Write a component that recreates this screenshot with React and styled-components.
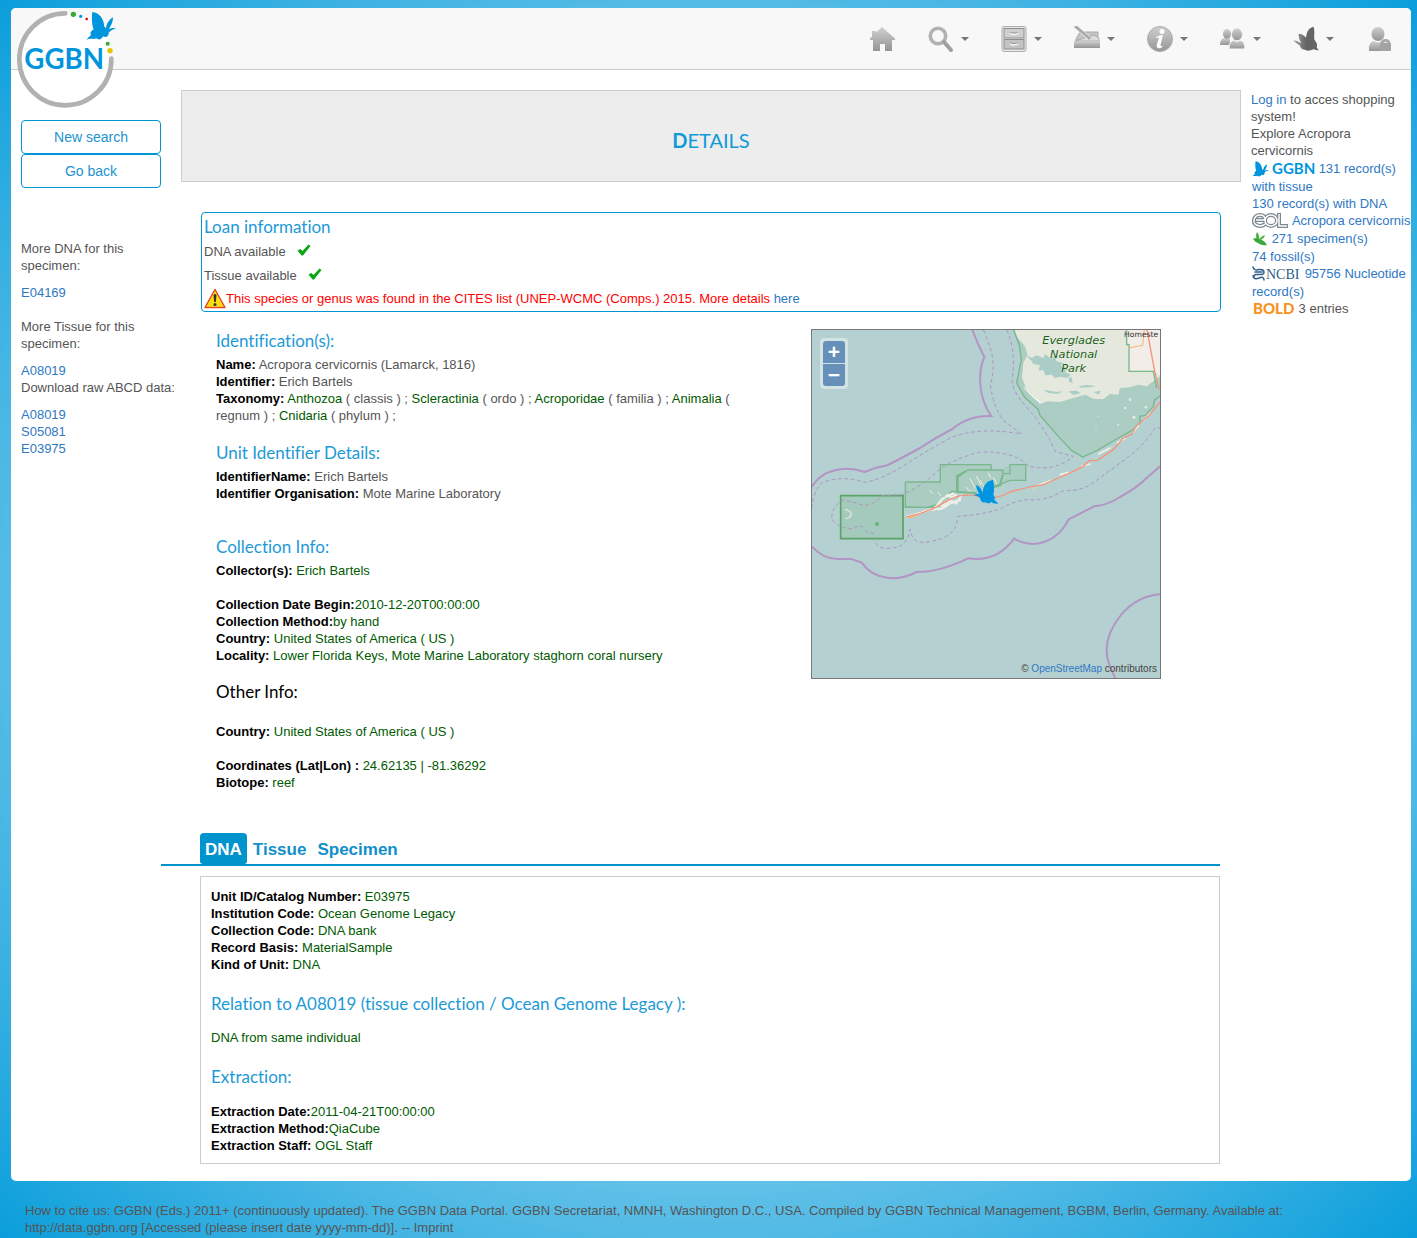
import { useState } from "react";
import styled, { createGlobalStyle } from "styled-components";

const GlobalStyle = createGlobalStyle`
  * {
    box-sizing: border-box;
  }

  html {
    min-height: 100%;
  }

  body {
    margin: 0;
    min-height: 100vh;
    background: radial-gradient(ellipse at center, #ffffff 0%, #0a9edb 100%);
    color: #555;
    font-family: "Liberation Sans", Arial, sans-serif;
    font-size: 13px;
    line-height: 17px;
  }

  a {
    color: #2f78c4;
    text-decoration: none;
  }

  svg {
    flex-shrink: 0;
  }
`;

const Page = styled.div`
  padding: 8px 6px 0 11px;
`;

const Sheet = styled.div`
  padding-bottom: 17px;
  border-radius: 5px;
  background: #fff;
`;

const Header = styled.header`
  position: relative;
  display: flex;
  justify-content: flex-end;
  height: 62px;
  padding: 1px 19px 0 0;
  border-bottom: 1px solid #ccc;
  border-radius: 5px 5px 0 0;
  background: #f8f8f8;
`;

const LogoLink = styled.a`
  position: absolute;
  top: 0;
  left: 5px;
`;

const Nav = styled.nav`
  display: flex;
  align-items: center;
  gap: 32px;
`;

const NavButton = styled.button`
  display: flex;
  align-items: center;
  gap: 7px;
  padding: 0;
  border: 0;
  background: none;
  cursor: pointer;
`;

const Caret = styled.span`
  border: 4px solid transparent;
  border-top-color: #777;
  border-bottom: 0;
`;

const Columns = styled.div`
  display: grid;
  grid-template-columns: 150px minmax(0, 1fr) 170px;
`;

const Sidebar = styled.aside`
  padding: 50px 0 0 10px;
  white-space: nowrap;
`;

const SideButton = styled.button`
  display: block;
  width: 100%;
  height: 34px;
  border: 1px solid #0095d5;
  border-radius: 4px;
  background: #fff;
  color: #1c93d0;
  font: 14px "Liberation Sans", Arial, sans-serif;
  cursor: pointer;
`;

const SideText = styled.p`
  width: 130px;
  margin: 0 0 10px;
  white-space: ${(props) => (props.$wide ? "nowrap" : "normal")};
`;

const SideLinks = styled.div`
  display: flex;
  flex-direction: column;
  align-items: flex-start;
  margin-bottom: ${(props) => (props.$gap ? "17px" : "0")};
`;

const SideGroups = styled.div`
  margin-top: 52px;
`;

const Main = styled.main`
  padding-top: 20px;
`;

const Banner = styled.div`
  display: flex;
  align-items: center;
  justify-content: center;
  height: 92px;
  margin-left: 20px;
  padding-top: 8px;
  border: 1px solid #ccc;
  background: #ededed;
`;

const Title = styled.h1`
  margin: 0;
  color: #0f9ad8;
  font: 400 20px/30px Lato, sans-serif;
  text-transform: uppercase;

  &::first-letter {
    font-weight: 700;
  }
`;

const LoanBox = styled.section`
  margin: 30px 20px 0 40px;
  padding: 0 2px 2px;
  border: 1px solid #0095d5;
  border-radius: 4px;
`;

const Heading = styled.h3`
  margin: ${(props) => props.$margin || "14px 0 0"};
  color: ${(props) => (props.$dark ? "#000" : "#1c9ad6")};
  font: 400 17px/30px Lato, sans-serif;
  font-variant-ligatures: none;
`;

const Available = styled.div`
  display: flex;
  align-items: center;
  gap: 11px;
  height: ${(props) => (props.$tall ? "26px" : "21px")};

  svg {
    margin-bottom: 3px;
  }
`;

const Warning = styled.p`
  display: flex;
  align-items: center;
  margin: 0;
  height: 21px;
  color: #f00;
`;

const Details = styled.div`
  display: grid;
  grid-template-columns: minmax(0, 1fr) 350px;
  align-items: start;
  margin: 17px 80px 0 55px;
`;

const Facts = styled.div`
  max-width: 530px;
  padding-bottom: 42px;
`;

const Row = styled.div`
  margin-top: ${(props) => (props.$gap ? "17px" : "0")};
  color: ${(props) => (props.$grey ? "#555" : "#005a00")};
`;

const Label = styled.strong`
  color: #000;
`;

const Taxon = styled.span`
  color: #005a00;
`;

const MapFrame = styled.div`
  position: relative;
  height: 350px;
  border: 1px solid #777;
  overflow: hidden;
`;

const MapImage = styled.svg`
  display: block;
  width: 100%;
  height: 100%;
`;

const ZoomBox = styled.div`
  position: absolute;
  top: 8px;
  left: 8px;
  display: flex;
  flex-direction: column;
  gap: 1px;
  padding: 3px;
  border-radius: 4px;
  background: rgba(255, 255, 255, 0.4);
`;

const ZoomButton = styled.button`
  width: 22px;
  height: 22px;
  padding: 0;
  border: 0;
  border-radius: ${(props) => (props.$last ? "0 0 3px 3px" : "3px 3px 0 0")};
  background: #668fb9;
  color: #fff;
  font: 700 21px/20px "Liberation Sans", Arial, sans-serif;
`;

const Attribution = styled.div`
  position: absolute;
  right: 3px;
  bottom: 1px;
  color: #444;
  font-size: 10px;
`;

const Tabs = styled.div`
  display: flex;
  gap: 1px;
  margin-right: 21px;
  padding-left: 39px;
  border-bottom: 2px solid #0093cc;
`;

const Tab = styled.button`
  height: 31px;
  padding: 2px 5px 0;
  border: 0;
  border-radius: 4px 4px 3px 3px;
  background: ${(props) => (props.$active ? "#0093cc" : "none")};
  color: ${(props) => (props.$active ? "#fff" : "#118fca")};
  font: 700 17px "Liberation Sans", Arial, sans-serif;
  cursor: pointer;
`;

const Panel = styled.section`
  margin: 10px 21px 0 39px;
  padding: 11px 10px 9px;
  border: 1px solid #ccc;
`;

const Explore = styled.aside`
  padding: 21px 0 0 10px;
`;

const ExploreList = styled.div`
  padding-left: 1px;
  margin-top: 1px;
`;

const Source = styled.div`
  white-space: ${(props) => (props.$nowrap ? "nowrap" : "normal")};

  svg {
    height: 18px;
    vertical-align: -5px;
  }
`;

const Footer = styled.footer`
  padding: 21px 14px 2px;
`;

function LogoButterfly({ color = "#0095dc" }) {
  return (
    <path
      fill={color}
      d="M277 36C297 38 311 54 313 80L318 84C320 69 329 58 339 52C340 63 334 76 326 88C332 84 341 82 348 86C338 87 332 91 326 98C327 108 319 114 309 109C305 119 296 121 289 115C282 120 272 113 260 119C264 112 269 109 273 105C269 99 273 93 281 88C275 74 275 52 277 36Z"
    />
  );
}

function SideButterfly({ fill }) {
  return (
    <path
      fill={fill}
      d="M549 456C530 458 518 474 518 496C516 484 508 474 498 471C499 482 503 491 508 498C502 496 496 501 489 500C497 503 506 504 510 510C511 518 517 526 526 523C532 527 540 528 544 521C549 528 556 525 565 528C562 522 558 520 553 516C557 510 553 504 550 500C554 486 552 468 549 456Z"
    />
  );
}

function Logo() {
  return (
    <svg width="101" height="100" viewBox="48 24 303 300">
      <circle cx="195" cy="177" r="139" fill="#fff" />
      <path
        d="M196 40A138 138 0 1 0 334 176"
        fill="none"
        stroke="#b1b1b1"
        strokeWidth="14"
        strokeLinecap="round"
      />
      <circle cx="220" cy="43" r="8" fill="#3aaa35" />
      <circle cx="242" cy="49" r="5" fill="#0095dc" />
      <circle cx="260" cy="57" r="4" fill="#e3001b" />
      <circle cx="323" cy="131" r="6" fill="#3aaa35" />
      <circle cx="330" cy="152" r="8" fill="#e8c200" />
      <LogoButterfly />
      <text
        x="73"
        y="207"
        fill="#0095dc"
        fontFamily="Lato, sans-serif"
        fontWeight="700"
        fontSize="83"
      >
        GGBN
      </text>
    </svg>
  );
}

function NavIcon({ name }) {
  const fill = "url(#metal)";
  return (
    <svg width="26" height="26" viewBox="0 0 26 26">
      {name === "home" && (
        <path
          fill={fill}
          d="M12 1L17 5.5L25 12.5V14H22V25H15V18H10V25H3V14H0V12.5L2 10.500V5H6V6.5Z"
        />
      )}
      {name === "search" && (
        <>
          <circle cx="10" cy="10" r="7.7" fill="none" stroke="#b2b2b2" strokeWidth="3.6" />
          <path d="M16 16L23 24" stroke="#a0a0a0" strokeWidth="4" strokeLinecap="round" />
        </>
      )}
      {name === "collection" && (
        <>
          <rect x="1" y="0.500" width="24" height="25" rx="2" fill="#e8e8e8" stroke="#b0b0b0" />
          <rect x="3" y="2.500" width="20" height="9.500" fill="#cfcfcf" stroke="#8f8f8f" />
          <rect x="3" y="13.500" width="20" height="9.500" fill="#c3c3c3" stroke="#8f8f8f" />
          <path d="M9 7Q10 8.500 13 8.500T17 7M9 17.500Q10 19 13 19T17 17.500" fill="none" stroke="#f4f4f4" strokeWidth="1.500" />
          <path d="M9 6Q10 7 13 7T17 6M9 16.500Q10 17.500 13 17.500T17 16.500" fill="none" stroke="#999" />
        </>
      )}
      {name === "tray" && (
        <>
          <path d="M2 13L6 6L24 6V14H2Z" fill="#c4c4c4" stroke="#aaa" />
          <path d="M1 15L20 9L25 12V15Z" fill="#ddd" stroke="#aaa" />
          <path d="M0 15H26V22H0Z" fill={fill} />
          <path d="M1 0L15 12" stroke="#fff" strokeWidth="4" />
          <path d="M1 0L14 11L16 13" stroke="#aaa" strokeWidth="3" />
        </>
      )}
      {name === "info" && (
        <>
          <circle cx="13" cy="13" r="12.500" fill={fill} stroke="#aaa" />
          <circle cx="15" cy="5.500" r="2.500" fill="#fff" />
          <path d="M9 11Q13 9 16 9L13.500 19Q13 21 16.500 19.500Q14 23 11 22Q9 21 10 18L12 12Q11 11 9 12Z" fill="#fff" />
        </>
      )}
      {name === "people" && (
        <>
          <ellipse cx="7" cy="8" rx="4" ry="5" fill={fill} />
          <path d="M0 19Q0 13 4 12Q7 14 10 12V19Z" fill={fill} />
          <ellipse cx="17" cy="8.500" rx="5.500" ry="6.500" fill={fill} stroke="#f8f8f8" />
          <path d="M9 23Q9 15 14 14Q17 17 20 14Q25 15 25 23Z" fill={fill} stroke="#f8f8f8" />
        </>
      )}
      {name === "user" && (
        <>
          <ellipse cx="12" cy="8" rx="6.500" ry="7" fill={fill} />
          <path d="M3 25Q2 16 8 15Q12 18 16 15L18 25Z" fill={fill} />
          <path d="M16 18Q16 14.500 19.500 14.500T23 18" fill="none" stroke="#aaa" strokeWidth="3" />
          <rect x="14" y="17" width="11" height="8" rx="1" fill="#a3a3a3" />
        </>
      )}
      {name === "butterfly" && (
        <svg viewBox="489 46 80 77">
          <path
            fill="url(#dusk)"
            d="M552 47C540 50 531 60 529 81C524 73 516 68 506 68C507 81 509 90 515 97C508 95 502 89 490 88C495 95 503 99 510 104C511 112 517 118 524 117C532 123 544 120 551 116L568 120L562 110C566 101 559 93 555 87C553 72 557 58 552 47Z"
          />
        </svg>
      )}
      <defs>
        <linearGradient id="metal" x1="0" y1="0" x2="0" y2="1">
          <stop offset="0" stopColor="#d0d0d0" />
          <stop offset="1" stopColor="#959595" />
        </linearGradient>
        <linearGradient id="dusk" x1="0" y1="0" x2="1" y2="0">
          <stop offset="0" stopColor="#a5a5a5" />
          <stop offset="0.5" stopColor="#656565" />
          <stop offset="1" stopColor="#666" />
        </linearGradient>
      </defs>
    </svg>
  );
}

function Check() {
  return (
    <svg width="14" height="12" viewBox="0 0 14 12">
      <path d="M0.500 6.500L3.500 5L5.500 7L11.500 0.500L13.500 2L6 11.500H4.500Z" fill="#0ca516" />
    </svg>
  );
}

function WarningSign() {
  return (
    <svg width="22" height="21" viewBox="0 0 22 21">
      <path d="M11 1.500L21 19.500H1Z" fill="#ffe81a" stroke="#e2492c" strokeWidth="1.500" strokeLinejoin="round" />
      <path d="M11 5L16 14L18.500 18H3.500Z" fill="#ffd000" opacity="0.5" />
      <path d="M9.500 7Q11 5 12.500 7L11.800 14H10.200Z" fill="#333" />
      <circle cx="11" cy="16.500" r="1.500" fill="#333" />
    </svg>
  );
}

// Florida Keys, drawn at three units per pixel
function KeysMap() {
  return (
    <MapImage viewBox="6 6 1044 1044" preserveAspectRatio="xMidYMid slice" role="img" aria-label="Map">
      <rect x="0" y="0" width="1056" height="1056" fill="#b5d0d0" />
      <path d="M608 0L634 95L620 165L644 208L685 245L690 262L745 325L785 368L818 387L862 367L915 336L970 305L990 285V265L1030 235L1050 200V0Z" fill="#abcdc4" />
      <path d="M612 0L622 28L645 55L652 80L640 105L636 150L650 185L668 205L690 228L712 220L750 222L790 210L826 200L850 212L880 214L900 198L925 200L930 180L960 178L985 170L1010 175L1050 145V0Z" fill="#e5e8dd" />
      <path d="M950 0H1060V150L1035 130L957 130V50L948 45Z" fill="#f2ede8" />
      <path d="M645 78L665 90L680 82L700 90L705 78L722 92L735 84L740 100L762 106L752 114L775 120L765 132L782 140L772 150L750 146L735 150L725 140L706 142L700 126L685 128L690 112L670 108L664 98Z" fill="#abcdc8" />
      <path d="M806 175L830 171L858 174L840 178L812 179ZM775 190L800 188L812 196L790 201ZM850 192L872 188L866 200ZM700 185L740 192L760 190L742 198L715 195ZM775 150L785 148L788 165L778 162Z" fill="#abcdc8" />
      <path d="M642 178Q665 208 692 224" fill="none" stroke="#fff" strokeWidth="3" />
      <g fill="#e5e8dd">
        <circle cx="865" cy="265" r="2" />
        <circle cx="858" cy="297" r="2" />
        <circle cx="945" cy="240" r="4" />
        <circle cx="972" cy="268" r="5" />
        <circle cx="1008" cy="238" r="4" />
        <circle cx="925" cy="290" r="3" />
        <circle cx="960" cy="215" r="4" />
      </g>
      <path d="M92 503H280V632H92Z" fill="#a4c9bd" />
      <path d="M286 462H391V410H543V426H572L600 410H647V457H600L572 474L500 482L440 495L400 520L370 538H286Z" fill="#aacdc2" />
      <g fill="none" stroke="#79b78c" strokeWidth="4">
        <path d="M608 0L628 50L634 95L620 165L644 208L685 245L690 262L745 325L785 368L818 387L862 367L915 336L970 305L990 285V265L1005 262L1030 235L1034 215L1050 205" />
        <path d="M950 0V50H957V130H1030L1040 180" />
        <path d="M286 462H391V410H543V426H475L440 443V490H425L400 510L375 538H286V462M286 538V536L350 538L380 530" />
        <path d="M543 426H578V437H600V410H647V457H600L572 468L555 474" />
        <path d="M466 430L443 447V492L500 495M578 440L570 472L548 478" strokeWidth="6" />
      </g>
      <path d="M92 503H279V632H92Z" fill="none" stroke="#58a564" strokeWidth="5" />
      <circle cx="201" cy="588" r="6" fill="#68b080" />
      <path d="M104 544Q124 548 124 560Q120 570 106 572" fill="none" stroke="#e3e7da" strokeWidth="4" />
      <g fill="none" stroke="#eff0e7" strokeLinecap="round">
        <path d="M375 540L395 515L415 500L425 510L440 500M395 533L420 518L438 526L455 502M410 505L430 497M292 566L330 555L360 545L395 542L420 526L450 516" strokeWidth="7" strokeDasharray="13 5 22 7" />
        <path d="M480 452L495 480M500 445L512 470M512 458L520 475M468 478L480 490M535 435L542 449M550 448L560 468M360 488L368 496M385 494L392 503" strokeWidth="3" />
        <path d="M680 473L725 457M750 440L775 434M815 415L840 408M865 378L900 360M922 344L945 331M968 313L985 293M1000 278L1022 255" strokeWidth="5" />
      </g>
      <g fill="none" stroke="#b295c5" strokeWidth="6">
        <path d="M485 0Q500 42 523 87C505 130 502 205 544 264Q475 262 427 303Q375 330 330 360Q290 382 232 412Q195 418 164 432C105 410 35 425 6 476" />
        <path d="M6 656Q44 697 90 693H124L155 704C194 760 266 760 320 732Q390 732 474 691Q560 704 612 632C670 665 740 645 776 574Q817 554 852 535Q892 532 930 507Q980 480 1010 450L1050 415" />
        <path d="M1050 799Q980 805 934 860Q868 940 901 1018L918 1056" />
      </g>
      <g fill="none" stroke="#ad94c2" strokeWidth="3" strokeDasharray="11 8">
        <path d="M520 6C545 60 560 110 541 170Q550 240 583 280L635 318Q505 295 420 330Q330 380 270 420Q210 455 165 463Q95 440 35 465Q6 500 6 540" />
        <path d="M590 6C615 60 612 100 606 165C620 220 670 250 690 290Q715 320 735 370L790 385Q735 432 655 415Q620 370 510 372Q440 390 390 423Q330 480 275 500L215 503Q180 545 140 525L100 516Q65 535 65 572Q85 602 125 602L152 592Q165 614 190 616Q195 670 240 660Q292 660 300 604Q310 655 360 640Q440 630 443 565Q520 560 570 543Q620 515 660 515Q710 519 760 488Q820 490 855 460Q925 410 970 375Q1010 340 1035 300H1050" />
      </g>
      <g fill="none" stroke="#f49378" strokeWidth="4">
        <path d="M290 567L330 557L370 542L420 514Q460 494 510 506Q560 516 600 492Q655 476 700 470L745 450L790 430L820 415L838 398L862 397L910 365L940 330L965 318L980 292L1015 265L1050 222" />
        <path d="M1010 0L1034 130L1048 185" />
      </g>
      <path d="M290 570L325 563M955 60L998 52L1003 0" fill="none" stroke="#f4b56d" strokeWidth="3" />
      <circle cx="672" cy="482" r="6" fill="#c5d7b4" />
      <g fill="#186020" stroke="#f1f4e9" strokeWidth="2" paintOrder="stroke" fontFamily="DejaVu Sans, sans-serif" fontStyle="italic" fontSize="34" textAnchor="middle">
        <text x="791" y="47">Everglades</text>
        <text x="791" y="89">National</text>
        <text x="791" y="131">Park</text>
      </g>
      <text x="942" y="28" fill="#333" fontFamily="DejaVu Sans, sans-serif" fontSize="23">
        Homeste
      </text>
      <SideButterfly fill="#0095e1" />
    </MapImage>
  );
}

function GgbnMark() {
  return (
    <svg width="63" viewBox="0 0 63 18">
      <svg x="0" y="0" width="17" height="17" viewBox="258 34 92 88">
        <LogoButterfly />
      </svg>
      <text x="20" y="14" fill="#0095dc" fontFamily="Lato, sans-serif" fontWeight="700" fontSize="15">
        GGBN
      </text>
    </svg>
  );
}

function EolMark() {
  return (
    <svg width="37" viewBox="0 0 37 18" fill="none">
      <g stroke="#7d8791" strokeWidth="4">
        <path d="M3 8H13Q13 3 8 3T2 8T8 14Q11 14 13 12" />
        <ellipse cx="19" cy="8.500" rx="6" ry="5.500" />
        <path d="M27 1V14H36" />
      </g>
      <g stroke="#fff" strokeWidth="1.500">
        <path d="M4 8H13Q13 3 8 3T2 8T8 14Q11 14 13 12" />
        <ellipse cx="19" cy="8.500" rx="6" ry="5.500" />
        <path d="M27 2V14H35" />
      </g>
    </svg>
  );
}

function LeafMark() {
  return (
    <svg width="16" viewBox="0 0 16 18">
      <path d="M1 9Q4 7 8 9Q13 11 15 15Q10 16 6 13Q3 12 1 9Z" fill="#38a839" />
      <path d="M5 9Q3 6 5 2Q8 6 7 10Q9 6 13 5Q12 9 8 10Z" fill="#4bb044" />
    </svg>
  );
}

function NcbiMark() {
  return (
    <svg width="49" viewBox="0 0 49 18">
      <g fill="none" stroke="#315d88" strokeWidth="1.500" strokeLinecap="round">
        <path d="M1 2Q2 6 7 4.500Q12 4 12 7.500Q12 10 6 9.500Q2 9 2 11.500M1 11Q2 15 7 13T12 15M3 7H10" />
      </g>
      <text x="14" y="14" fill="#315d88" fontFamily="Liberation Serif, serif" fontSize="14">
        NCBI
      </text>
    </svg>
  );
}

function BoldMark() {
  return (
    <svg width="43" viewBox="0 0 43 18">
      <text x="1" y="14" fill="#f7931e" fontFamily="Lato, sans-serif" fontWeight="900" fontSize="15">
        BOLD
      </text>
    </svg>
  );
}

const navItems = ["home", "search", "collection", "tray", "info", "people", "butterfly", "user"];

const taxa = [
  ["Anthozoa", "classis"],
  ["Scleractinia", "ordo"],
  ["Acroporidae", "familia"],
  ["Animalia", "regnum"],
  ["Cnidaria", "phylum"],
];

const unitRows = [
  ["Unit ID/Catalog Number:", "E03975"],
  ["Institution Code:", "Ocean Genome Legacy"],
  ["Collection Code:", "DNA bank"],
  ["Record Basis:", "MaterialSample"],
  ["Kind of Unit:", "DNA"],
];

function Fact({ label, children, ...props }) {
  return (
    <Row {...props}>
      <Label>{label}</Label>
      {children}
    </Row>
  );
}

function App() {
  const [tab, setTab] = useState("DNA");

  return (
    <>
      <GlobalStyle />
      <Page>
        <Sheet>
          <Header>
            <LogoLink href="#home" aria-label="GGBN">
              <Logo />
            </LogoLink>
            <Nav>
              {navItems.map((name) => (
                <NavButton key={name} type="button" aria-label={name}>
                  <NavIcon name={name} />
                  {name !== "home" && name !== "user" && <Caret />}
                </NavButton>
              ))}
            </Nav>
          </Header>

          <Columns>
            <Sidebar>
              <SideButton type="button">New search</SideButton>
              <SideButton type="button">Go back</SideButton>
              <SideGroups>
                <SideText>More DNA for this specimen:</SideText>
                <SideLinks $gap>
                  <a href="#E04169">E04169</a>
                </SideLinks>
                <SideText>More Tissue for this specimen:</SideText>
                <SideLinks>
                  <a href="#A08019">A08019</a>
                </SideLinks>
                <SideText $wide>Download raw ABCD data:</SideText>
                <SideLinks>
                  <a href="#abcd-A08019">A08019</a>
                  <a href="#abcd-S05081">S05081</a>
                  <a href="#abcd-E03975">E03975</a>
                </SideLinks>
              </SideGroups>
            </Sidebar>

            <Main>
              <Banner>
                <Title>Details</Title>
              </Banner>

              <LoanBox>
                <Heading $margin="-1px 0">Loan information</Heading>
                <Available>
                  DNA available
                  <Check />
                </Available>
                <Available $tall>
                  Tissue available
                  <Check />
                </Available>
                <Warning>
                  <WarningSign />
                  <span>
                    This species or genus was found in the CITES list (UNEP-WCMC (Comps.) 2015. More
                    details <a href="#cites">here</a>
                  </span>
                </Warning>
              </LoanBox>

              <Details>
                <Facts>
                  <Heading $margin="-3px 0 0">Identification(s):</Heading>
                  <Fact label="Name:" $grey> Acropora cervicornis (Lamarck, 1816)</Fact>
                  <Fact label="Identifier:" $grey> Erich Bartels</Fact>
                  <Fact label="Taxonomy:" $grey>
                    {taxa.map(([name, rank]) => (
                      <span key={name}>
                        {" "}
                        <Taxon>{name}</Taxon> ( {rank} ) ;
                      </span>
                    ))}
                  </Fact>

                  <Heading>Unit Identifier Details:</Heading>
                  <Fact label="IdentifierName:" $grey> Erich Bartels</Fact>
                  <Fact label="Identifier Organisation:" $grey> Mote Marine Laboratory</Fact>

                  <Heading $margin="30px 0 0">Collection Info:</Heading>
                  <Fact label="Collector(s):"> Erich Bartels</Fact>
                  <Fact label="Collection Date Begin:" $gap>2010-12-20T00:00:00</Fact>
                  <Fact label="Collection Method:">by hand</Fact>
                  <Fact label="Country:"> United States of America ( US )</Fact>
                  <Fact label="Locality:">
                    {" "}
                    Lower Florida Keys, Mote Marine Laboratory staghorn coral nursery
                  </Fact>

                  <Heading $dark $margin="13px 0 -1px">Other Info:</Heading>
                  <Fact label="Country:" $gap> United States of America ( US )</Fact>
                  <Fact label="Coordinates (Lat|Lon) :" $gap> 24.62135 | -81.36292</Fact>
                  <Fact label="Biotope:"> reef</Fact>
                </Facts>

                <MapFrame>
                  <KeysMap />
                  <ZoomBox>
                    <ZoomButton type="button" aria-label="Zoom in">+</ZoomButton>
                    <ZoomButton type="button" aria-label="Zoom out" $last>−</ZoomButton>
                  </ZoomBox>
                  <Attribution>
                    © <a href="#osm">OpenStreetMap</a> contributors
                  </Attribution>
                </MapFrame>
              </Details>

              <Tabs role="tablist">
                {["DNA", "Tissue", "Specimen"].map((name) => (
                  <Tab
                    key={name}
                    type="button"
                    role="tab"
                    aria-selected={tab === name}
                    $active={tab === name}
                    onClick={() => setTab(name)}
                  >
                    {name}
                  </Tab>
                ))}
              </Tabs>
              <Panel role="tabpanel">
                {unitRows.map(([label, value]) => (
                  <Fact key={label} label={label}> {value}</Fact>
                ))}
                <Heading $margin="16px 0 10px">
                  Relation to A08019 (tissue collection / Ocean Genome Legacy ):
                </Heading>
                <Row>DNA from same individual</Row>
                <Heading $margin="16px 0 11px">Extraction:</Heading>
                <Fact label="Extraction Date:">2011-04-21T00:00:00</Fact>
                <Fact label="Extraction Method:">QiaCube</Fact>
                <Fact label="Extraction Staff:"> OGL Staff</Fact>
              </Panel>
            </Main>

            <Explore>
              <div>
                <a href="#login">Log in</a> to acces shopping system!
              </div>
              <div>Explore Acropora cervicornis</div>
              <ExploreList>
                <Source>
                  <GgbnMark /> <a href="#tissue">131 record(s) with tissue</a>
                </Source>
                <Source>
                  <a href="#dna">130 record(s) with DNA</a>
                </Source>
                <Source $nowrap>
                  <EolMark /> <a href="#eol">Acropora cervicornis</a>
                </Source>
                <Source>
                  <LeafMark /> <a href="#specimens">271 specimen(s)</a>
                </Source>
                <Source>
                  <a href="#fossils">74 fossil(s)</a>
                </Source>
                <Source>
                  <NcbiMark /> <a href="#ncbi">95756 Nucleotide record(s)</a>
                </Source>
                <Source>
                  <BoldMark /> 3 entries
                </Source>
              </ExploreList>
            </Explore>
          </Columns>
        </Sheet>
        <Footer>
          How to cite us: GGBN (Eds.) 2011+ (continuously updated). The GGBN Data Portal. GGBN
          Secretariat, NMNH, Washington D.C., USA. Compiled by GGBN Technical Management, BGBM,
          Berlin, Germany. Available at: http://data.ggbn.org [Accessed (please insert date
          yyyy-mm-dd)]. -- Imprint
        </Footer>
      </Page>
    </>
  );
}

export default App;
